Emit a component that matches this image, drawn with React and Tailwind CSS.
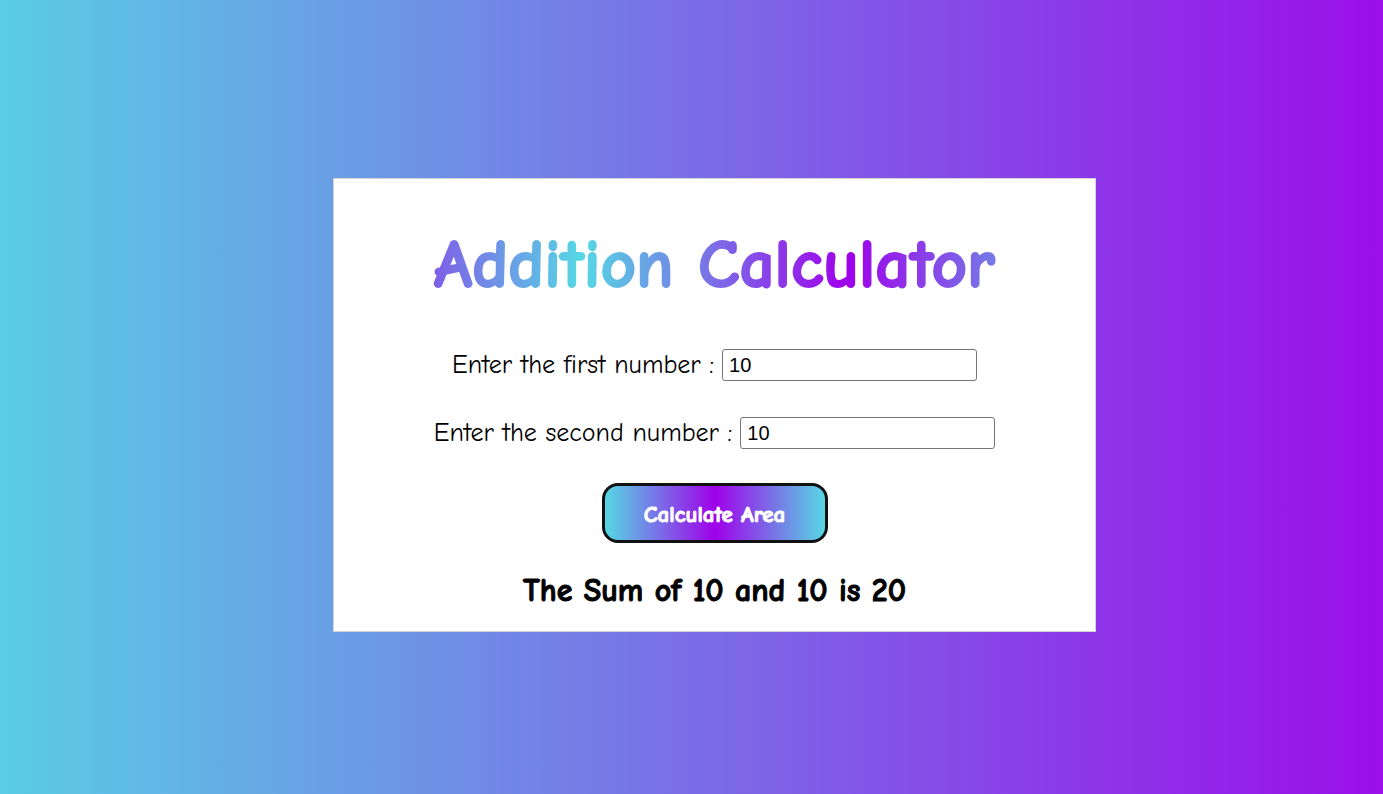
import { useState } from "react";

function NumberField({ id, label, value, onChange }) {
  return (
    <div className="flex flex-wrap items-center justify-center gap-2">
      <label htmlFor={id} className="text-[26px] leading-8">
        {label}
      </label>
      <input
        id={id}
        type="text"
        inputMode="numeric"
        value={value}
        onChange={(e) => onChange(e.target.value)}
        className="h-8 w-[255px] rounded-[3px] border border-[#767676] bg-white px-[6px] font-['Liberation_Sans',Arial,sans-serif] text-xl"
      />
    </div>
  );
}

export default function App() {
  const [first, setFirst] = useState("10");
  const [second, setSecond] = useState("10");
  const [result, setResult] = useState({ a: 10, b: 10 });

  const calculate = (e) => {
    e.preventDefault();
    setResult({ a: Number(first), b: Number(second) });
  };

  return (
    <div className="flex min-h-screen items-center justify-center bg-[linear-gradient(to_right,#56d8e4_-6%,#9f01ea_107%)] pt-4 pl-[46px] font-['Comic_Sans_MS','Comic_Neue','Noto_Sans',sans-serif] text-black [font-variant-ligatures:none]">
      <main className="w-[calc(50vw+72px)] min-w-[600px] border border-[#d3d3d3] bg-white pt-[38px] pb-5 text-center">
        <h1 className="bg-[linear-gradient(to_right,#9f01ea_-2%,#56d8e4_32.5%,#9f01ea_67.5%,#56d8e4_102%)] bg-clip-text text-[69px] leading-24 font-bold text-transparent [-webkit-text-stroke:2px_transparent]">
          Addition Calculator
        </h1>
        <form onSubmit={calculate} className="mt-9 flex flex-col items-center">
          <NumberField id="first" label="Enter the first number :" value={first} onChange={setFirst} />
          <div className="mt-9">
            <NumberField id="second" label="Enter the second number :" value={second} onChange={setSecond} />
          </div>
          <button
            type="submit"
            className="mt-[34px] h-[60px] w-[226px] rounded-2xl border-3 border-[#111111] bg-[linear-gradient(to_right,#56d8e4,#9f01ea,#56d8e4)] pt-1 text-[23px] font-bold text-white [-webkit-text-stroke:1px]"
          >
            Calculate Area
          </button>
        </form>
        <p className="mt-7 text-[32px] leading-10 font-bold [-webkit-text-stroke:1px]">
          The Sum of {result.a} and {result.b} is {result.a + result.b}
        </p>
      </main>
    </div>
  );
}
